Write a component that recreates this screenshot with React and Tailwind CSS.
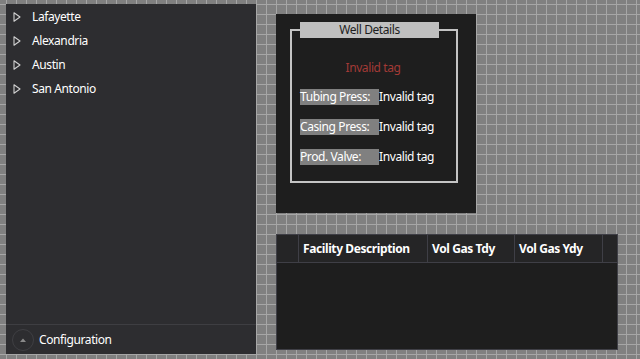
import React from "react";

const Tri = () => (
  <svg width="8" height="10" viewBox="0 0 8 10" className="shrink-0">
    <path d="M1 0.8 L7 5 L1 9.2 Z" fill="none" stroke="#d0d0d0" strokeWidth="1.1" strokeLinejoin="round" />
  </svg>
);

export default function App() {
  const items = ["Lafayette", "Alexandria", "Austin", "San Antonio"];
  const rows = ["Tubing Press:", "Casing Press:", "Prod. Valve:"];
  return (
    <div
      className="w-[640px] h-[359px] overflow-hidden bg-[#808080] bg-[linear-gradient(to_right,#a6a6a6_1px,transparent_1px),linear-gradient(to_bottom,#a6a6a6_1px,transparent_1px)] bg-[size:10px_10px] bg-[position:6px_4px] flex text-[12px] tracking-[-0.4px] font-['Noto_Sans',sans-serif]"
    >
      {/* Left panel */}
      <div className="ml-[6px] mt-[4px] w-[250px] h-[350px] bg-[#2d2d30] flex flex-col">
        <div className="flex-1 pt-[1px]">
          {items.map((t) => (
            <div key={t} className="h-[24px] flex items-center pl-[7px] text-white">
              <Tri />
              <span className="ml-[11px]">{t}</span>
            </div>
          ))}
        </div>
        <div className="h-[30px] border-t border-[#3e3e42] flex items-center pl-[6px]">
          <div className="w-[22px] h-[22px] rounded-full border border-[#3f3f43] flex items-center justify-center">
            <svg width="8" height="6" viewBox="0 0 8 6">
              <path d="M1 5 L4 1.5 L7 5 Z" fill="#8a8a8a" />
            </svg>
          </div>
          <span className="ml-[5px] text-white">Configuration</span>
        </div>
      </div>

      {/* Right area */}
      <div className="ml-[20px] flex flex-col">
        <div className="mt-[14px] w-[200px] h-[199px] bg-[#1e1e1e] relative">
          <div className="absolute left-[14px] top-[15px] w-[168px] h-[154px] border-2 border-[#c4c4c4]" />
          <div className="relative pt-[8px] pl-[24px]">
            <div className="w-[139px] h-[16px] bg-[#c0c0c0] text-[#1e1e1e] flex items-center justify-center leading-none">
              Well Details
            </div>
            <div className="mt-[24px] w-[146px] text-center text-[#a33a36] leading-none">Invalid tag</div>
            <div className="mt-[15px] flex flex-col gap-[14px]">
              {rows.map((r) => (
                <div key={r} className="flex items-center h-[16px]">
                  <div className="w-[79px] h-[16px] bg-[#808080] text-white flex items-center leading-none">{r}</div>
                  <span className="text-white leading-none">Invalid tag</span>
                </div>
              ))}
            </div>
          </div>
        </div>

        <div className="mt-[21px] w-[342px] h-[116px] bg-[#1e1e1e] border border-[#3f3f46] flex flex-col">
          <div className="h-[28px] bg-[#252526] border-b border-[#3f3f46] flex text-white font-bold">
            <div className="w-[22px] border-r border-[#3f3f46]" />
            <div className="w-[129px] border-r border-[#3f3f46] flex items-center pl-[4px]">Facility Description</div>
            <div className="w-[87px] border-r border-[#3f3f46] flex items-center pl-[4px]">Vol Gas Tdy</div>
            <div className="w-[88px] border-r border-[#3f3f46] flex items-center pl-[4px]">Vol Gas Ydy</div>
            <div className="flex-1" />
          </div>
        </div>
      </div>
    </div>
  );
}
